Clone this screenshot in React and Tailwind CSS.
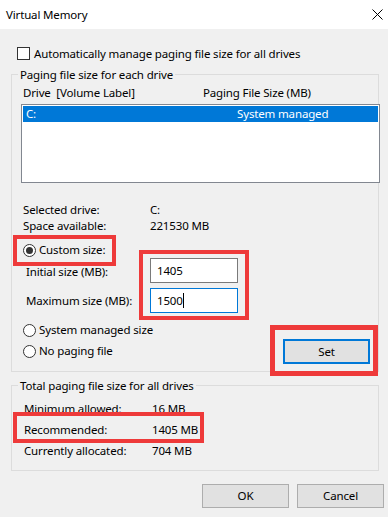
import React from "react";

function Radio({ checked }) {
  return (
    <span className="w-[13px] h-[13px] rounded-full border border-[#333333] bg-white flex items-center justify-center shrink-0">
      {checked && <span className="w-[7px] h-[7px] rounded-full bg-[#333333]" />}
    </span>
  );
}

function Group({ title, className = "", children }) {
  return (
    <div className={"ml-[11px] w-[368px] border border-[#dcdcdc] flex flex-col " + className}>
      <span className="block w-fit -mt-[8px] ml-[6px] px-[2px] bg-[#f0f0f0] leading-[16px]">{title}</span>
      {children}
    </div>
  );
}

export default function App() {
  return (
    <div
      className="relative w-[388px] h-[517px] bg-[#f0f0f0] text-[11.5px] tracking-[-0.15px] text-black overflow-hidden"
      style={{ fontFamily: '"Noto Sans", "Liberation Sans", sans-serif' }}
    >
      {/* Title bar */}
      <div className="h-[29px] bg-white flex items-center justify-between pl-[6px] pr-[5px]">
        <span className="leading-[16px] mt-[1px]">Virtual Memory</span>
        <svg width="11" height="11" viewBox="0 0 11 11">
          <path d="M0.5 0.5 L10.5 10.5 M10.5 0.5 L0.5 10.5" stroke="#000" strokeWidth="1" fill="none" />
        </svg>
      </div>

      {/* Checkbox */}
      <div className="flex items-center mt-[18px] ml-[17px] h-[13px] gap-[4px]">
        <span className="w-[13px] h-[13px] border border-[#333333] bg-white shrink-0" />
        <span className="leading-[16px]">Automatically manage paging file size for all drives</span>
      </div>

      {/* Group 1 */}
      <Group title="Paging file size for each drive" className="mt-[14px] h-[298px]">
        <div className="flex leading-[16px] mt-[2px] pl-[11px]">
          <span className="w-[180px] whitespace-pre">Drive  [Volume Label]</span>
          <span>Paging File Size (MB)</span>
        </div>
        <div className="mt-[3px] ml-[9px] w-[359px] h-[79px] border border-[#828790] bg-white p-[1px]">
          <div className="h-[16px] bg-[#0078d7] text-white flex items-center leading-[16px] pl-[3px]">
            <span className="w-[211px]">C:</span>
            <span>System managed</span>
          </div>
        </div>
        <div className="mt-[19px] pl-[11px] leading-[16px]">
          <div className="flex">
            <span className="w-[127px]">Selected drive:</span>
            <span>C:</span>
          </div>
          <div className="flex">
            <span className="w-[127px]">Space available:</span>
            <span>221530 MB</span>
          </div>
        </div>
        <div className="mt-[8px] ml-[11px] flex items-center gap-[3px] h-[16px] leading-[16px]">
          <Radio checked />
          <span>Custom size:</span>
        </div>
        <div className="flex items-center pl-[14px] h-[25px]">
          <span className="w-[124px] pt-[2px] leading-[16px]">Initial size (MB):</span>
          <div className="w-[88px] h-[25px] border border-[#7a7a7a] bg-white flex items-center pl-[6px] leading-[16px]">
            1405
          </div>
        </div>
        <div className="flex items-center pl-[14px] h-[25px] mt-[5px]">
          <span className="w-[124px] leading-[16px]">Maximum size (MB):</span>
          <div className="w-[88px] h-[25px] border border-[#0078d7] bg-white flex items-center pl-[6px] leading-[16px]">
            1500
            <span className="inline-block w-[1px] h-[15px] bg-black" />
          </div>
        </div>
        <div className="flex justify-between mt-[9px] pl-[11px] pr-[8px]">
          <div className="flex flex-col gap-[5px]">
            <div className="flex items-center gap-[3px] h-[16px] leading-[16px]">
              <Radio />
              <span>System managed size</span>
            </div>
            <div className="flex items-center gap-[3px] h-[16px] leading-[16px]">
              <Radio />
              <span>No paging file</span>
            </div>
          </div>
          <button className="mt-[17px] w-[87px] h-[25px] bg-[#e1e1e1] border-2 border-[#0078d7] flex items-center justify-center leading-[16px]">
            Set
          </button>
        </div>
      </Group>

      {/* Group 2 */}
      <Group title="Total paging file size for all drives" className="mt-[13px] h-[86px]">
        <div className="mt-[4px] pl-[12px] flex flex-col">
          <div className="flex items-center h-[21px]">
            <span className="w-[128px]">Minimum allowed:</span>
            <span>16 MB</span>
          </div>
          <div className="flex items-center h-[21px]">
            <span className="w-[128px]">Recommended:</span>
            <span>1405 MB</span>
          </div>
          <div className="flex items-center h-[21px]">
            <span className="w-[128px]">Currently allocated:</span>
            <span>704 MB</span>
          </div>
        </div>
      </Group>

      {/* Buttons */}
      <div className="flex justify-end gap-[8px] pr-[4px] mt-[13px]">
        <button className="w-[87px] h-[24px] bg-[#e1e1e1] border border-[#adadad] flex items-center justify-center leading-[16px]">
          OK
        </button>
        <button className="w-[87px] h-[24px] bg-[#e1e1e1] border border-[#adadad] flex items-center justify-center leading-[16px]">
          Cancel
        </button>
      </div>

      {/* Red annotation frames */}
      <div className="absolute left-[13px] top-[235px] w-[103px] h-[31px] border-[4px] border-[#ee3a3a] pointer-events-none" />
      <div className="absolute left-[139px] top-[250px] w-[110px] h-[70px] border-[4px] border-[#ee3a3a] pointer-events-none" />
      <div className="absolute left-[270px] top-[325px] w-[108px] h-[51px] border-[5px] border-[#ee3a3a] pointer-events-none" />
      <div className="absolute left-[13px] top-[412px] w-[191px] h-[31px] border-[4px] border-[#ee3a3a] pointer-events-none" />
    </div>
  );
}
